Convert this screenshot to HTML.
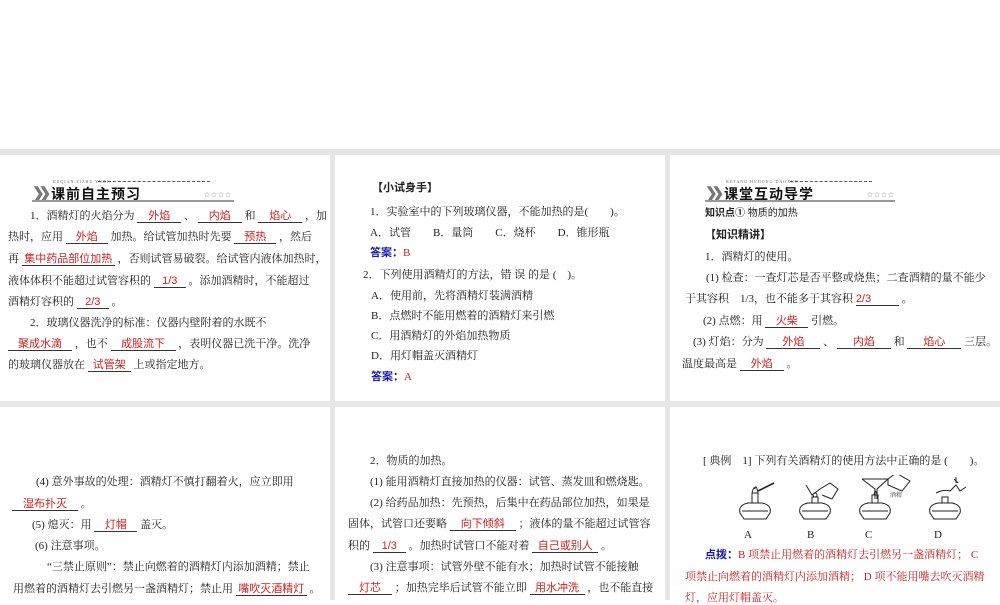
<!DOCTYPE html>
<html><head><meta charset="utf-8"><style>
*{margin:0;padding:0;box-sizing:border-box}
body{width:1000px;height:600px;background:#fff;position:relative;overflow:hidden;font-family:"Liberation Serif","Noto Serif CJK SC",serif;font-size:11px;color:#222}
.g{position:absolute;left:0;top:149px;width:1000px;height:451px;background:#e6e6e6}
.p{position:absolute;background:#fff}
.l{position:absolute;white-space:nowrap;line-height:14px;margin-top:1px}
.u{display:inline-block;border-bottom:1px solid #333;color:#d42020;text-align:center;line-height:12px;font-family:"Liberation Sans","Noto Sans CJK SC",sans-serif}
.b{color:#1a1aa8;font-family:"Liberation Sans","Noto Sans CJK SC",sans-serif;font-weight:bold}
.r{color:#d42020}
.s{font-family:"Liberation Sans","Noto Sans CJK SC",sans-serif}
.hd{position:absolute;height:22px}
.hd .ar{position:absolute;left:0;top:3px;font-size:15px;font-weight:bold;color:#777;letter-spacing:-6px}
.hd .t{position:absolute;left:19px;top:3px;font-size:14px;font-weight:bold;font-family:"Liberation Sans","Noto Sans CJK SC",sans-serif;color:#111;letter-spacing:1px}
.hd .py{position:absolute;left:21px;top:-2px;font-size:4px;color:#666;letter-spacing:1px}
.hd .dl{position:absolute;top:0;height:0;border-top:1px dashed #555}
.hd .st{position:absolute;top:9px;font-size:6px;color:#999;letter-spacing:1px}
.hd .ul{position:absolute;left:0;top:19px;height:2px;background:#999}
</style></head><body>
<div class="g"></div>
<div class="p" style="left:0;top:155px;width:330px;height:246px"></div>
<div class="p" style="left:335px;top:155px;width:330px;height:246px"></div>
<div class="p" style="left:670px;top:155px;width:330px;height:246px"></div>
<div class="p" style="left:0;top:407px;width:330px;height:193px"></div>
<div class="p" style="left:335px;top:407px;width:330px;height:193px"></div>
<div class="p" style="left:670px;top:407px;width:330px;height:193px"></div>

<div class="hd" style="left:32px;top:181px;width:202px">
<span class="ar">❯❯</span><span class="py">KEQIAN ZIZHU YUXI</span><span class="dl" style="left:66px;width:112px"></span>
<span class="t">课前自主预习</span><span class="st" style="left:172px">☆☆☆☆</span><span class="ul" style="width:202px"></span></div>
<div class="l" style="left:30px;top:208px">1．酒精灯的火焰分为 <span class="u" style="width:44px">外焰</span> 、 <span class="u" style="width:44px">内焰</span> 和 <span class="u" style="width:44px">焰心</span> ，加</div>
<div class="l" style="left:8px;top:229px">热时，应用 <span class="u" style="width:42px">外焰</span> 加热。给试管加热时先要 <span class="u" style="width:42px">预热</span> ，然后</div>
<div class="l" style="left:8px;top:251px">再 <span class="u" style="width:93px">集中药品部位加热</span> ，否则试管易破裂。给试管内液体加热时，</div>
<div class="l" style="left:8px;top:273px">液体体积不能超过试管容积的 <span class="u" style="width:32px">1/3</span> 。添加酒精时，不能超过</div>
<div class="l" style="left:8px;top:294px">酒精灯容积的 <span class="u" style="width:32px">2/3</span> 。</div>
<div class="l" style="left:30px;top:315px">2．玻璃仪器洗净的标准：仪器内壁附着的水既不</div>
<div class="l" style="left:8px;top:336px"><span class="u" style="width:64px">聚成水滴</span> ，也不 <span class="u" style="width:65px">成股流下</span> ，表明仪器已洗干净。洗净</div>
<div class="l" style="left:8px;top:357px">的玻璃仪器放在 <span class="u" style="width:43px">试管架</span> 上或指定地方。</div>

<div class="l s" style="left:372px;top:180px;font-weight:bold">【小试身手】</div>
<div class="l" style="left:370px;top:204px">1．实验室中的下列玻璃仪器，不能加热的是(　　)。</div>
<div class="l" style="left:370px;top:225px">A．试管　　B．量筒　　C．烧杯　　D．锥形瓶</div>
<div class="l" style="left:370px;top:245px"><span class="b">答案：</span><span class="r">B</span></div>
<div class="l" style="left:363px;top:267px">2．下列使用酒精灯的方法，错 误 的是 (　)。</div>
<div class="l" style="left:371px;top:288px">A．使用前，先将酒精灯装满酒精</div>
<div class="l" style="left:371px;top:308px">B．点燃时不能用燃着的酒精灯来引燃</div>
<div class="l" style="left:371px;top:328px">C．用酒精灯的外焰加热物质</div>
<div class="l" style="left:371px;top:348px">D．用灯帽盖灭酒精灯</div>
<div class="l" style="left:371px;top:369px"><span class="b">答案：</span><span class="r">A</span></div>

<div class="hd" style="left:705px;top:181px;width:190px">
<span class="ar">❯❯</span><span class="py">KETANG HUDONG DAOXUE</span><span class="dl" style="left:85px;width:82px"></span>
<span class="t">课堂互动导学</span><span class="st" style="left:162px">☆☆☆☆</span><span class="ul" style="width:190px"></span></div>
<div class="l s" style="left:705px;top:206px;font-size:10px"><b>知识点①</b> 物质的加热</div>
<div class="l s" style="left:705px;top:227px;font-weight:bold">【知识精讲】</div>
<div class="l" style="left:705px;top:249px">1．酒精灯的使用。</div>
<div class="l" style="left:706px;top:270px">(1) 检查：一查灯芯是否平整或烧焦；二查酒精的量不能少</div>
<div class="l" style="left:685px;top:291px">于其容积　1/3，也不能多于其容积 <span class="u" style="width:43px;text-align:left">2/3</span> 。</div>
<div class="l" style="left:703px;top:313px">(2) 点燃：用 <span class="u" style="width:43px">火柴</span> 引燃。</div>
<div class="l" style="left:693px;top:334px">(3) 灯焰：分为 <span class="u" style="width:54px">外焰</span> 、 <span class="u" style="width:54px">内焰</span> 和 <span class="u" style="width:54px">焰心</span> 三层。</div>
<div class="l" style="left:682px;top:356px">温度最高是 <span class="u" style="width:44px">外焰</span> 。</div>

<div class="l" style="left:36px;top:474px">(4) 意外事故的处理：酒精灯不慎打翻着火，应立即用</div>
<div class="l" style="left:12px;top:496px"><span class="u" style="width:66px">湿布扑灭</span> 。</div>
<div class="l" style="left:32px;top:517px">(5) 熄灭：用 <span class="u" style="width:43px">灯帽</span> 盖灭。</div>
<div class="l" style="left:35px;top:538px">(6) 注意事项。</div>
<div class="l" style="left:47px;top:559px">“三禁止原则”：禁止向燃着的酒精灯内添加酒精；禁止</div>
<div class="l" style="left:13px;top:581px">用燃着的酒精灯去引燃另一盏酒精灯；禁止用 <span class="u" style="width:71px">嘴吹灭酒精灯</span> 。</div>

<div class="l" style="left:370px;top:453px">2．物质的加热。</div>
<div class="l" style="left:370px;top:474px">(1) 能用酒精灯直接加热的仪器：试管、蒸发皿和燃烧匙。</div>
<div class="l" style="left:370px;top:495px">(2) 给药品加热：先预热，后集中在药品部位加热，如果是</div>
<div class="l" style="left:348px;top:516px">固体，试管口还要略 <span class="u" style="width:66px">向下倾斜</span> ；液体的量不能超过试管容</div>
<div class="l" style="left:348px;top:538px">积的 <span class="u" style="width:33px">1/3</span> 。加热时试管口不能对着 <span class="u" style="width:66px">自己或别人</span> 。</div>
<div class="l" style="left:370px;top:559px">(3) 注意事项：试管外壁不能有水；加热时试管不能接触</div>
<div class="l" style="left:348px;top:580px"><span class="u" style="width:44px">灯芯</span> ；加热完毕后试管不能立即 <span class="u" style="width:55px">用水冲洗</span> ，也不能直接</div>

<div class="l" style="left:703px;top:453px">[ 典例　1]  下列有关酒精灯的使用方法中正确的是 (　　)。</div>
<svg style="position:absolute;left:730px;top:475px" width="240" height="50" viewBox="0 0 240 50" fill="none" stroke="#222" stroke-width="1">
<g transform="translate(8,0)"><path d="M2 38 Q0 30 10 28 L24 28 Q34 30 32 38 L28 44 L6 44 Z"/><path d="M4 36 L30 36"/><path d="M14 28 L14 18 L20 18 L20 28"/><path d="M14 18 Q16 10 17 14 Q18 8 20 18"/><path d="M20 16 L36 8" stroke-width="1.6"/></g>
<g transform="translate(68,0)"><path d="M2 38 Q0 30 10 28 L24 28 Q34 30 32 38 L28 44 L6 44 Z"/><path d="M4 36 L30 36"/><path d="M14 28 L14 22 L20 22 L20 28"/><circle cx="17" cy="20" r="2"/><path d="M8 10 L14 20 L22 14 L32 8 L40 14 L34 24 L24 20"/></g>
<g transform="translate(128,0)"><path d="M2 38 Q0 30 10 28 L24 28 Q34 30 32 38 L28 44 L6 44 Z"/><path d="M4 36 L30 36"/><path d="M14 28 L14 20 L20 20 L20 28"/><path d="M16 20 Q17 12 19 20"/><path d="M4 4 L30 4 L19 14 L19 24 M4 4 L17 14 L17 24"/><path d="M30 4 L38 -2 L52 6 L44 16 L30 10 Z"/><text x="32" y="22" font-size="6" fill="#444" stroke="none">酒精</text></g>
<g transform="translate(198,0)"><path d="M2 38 Q0 30 10 28 L24 28 Q34 30 32 38 L28 44 L6 44 Z"/><path d="M4 36 L30 36"/><path d="M14 28 L14 22 L20 22 L20 28"/><path d="M8 18 Q16 14 22 16 L28 10 L32 16 L38 12"/><path d="M26 4 L30 8 M28 2 L28 8"/></g>
</svg>
<div class="l" style="left:744px;top:527px">A</div>
<div class="l" style="left:807px;top:527px">B</div>
<div class="l" style="left:865px;top:527px">C</div>
<div class="l" style="left:934px;top:527px">D</div>
<div class="l r" style="left:705px;top:547px"><span class="b">点拨：</span>B 项禁止用燃着的酒精灯去引燃另一盏酒精灯； C</div>
<div class="l r" style="left:685px;top:569px">项禁止向燃着的酒精灯内添加酒精； D 项不能用嘴去吹灭酒精</div>
<div class="l r" style="left:685px;top:590px">灯，应用灯帽盖灭。</div>
</body></html>
